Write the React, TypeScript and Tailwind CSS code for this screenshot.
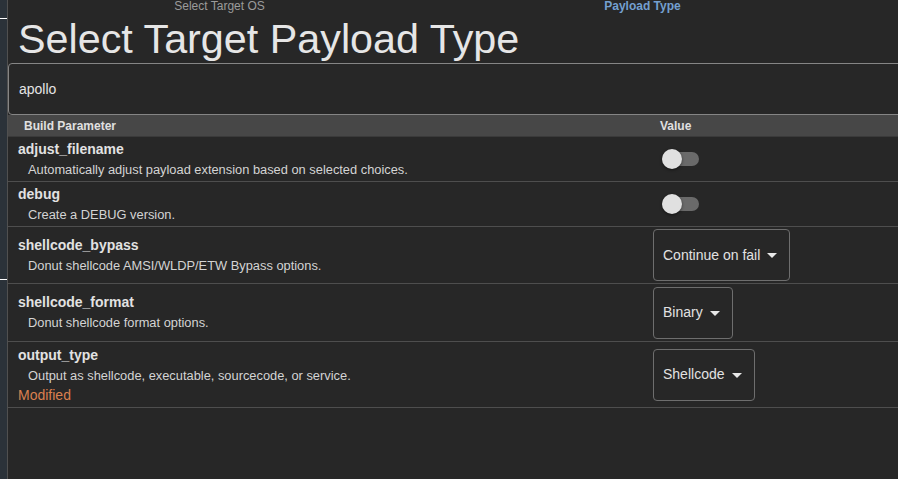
import React from "react";

type Param = {
  name: string;
  description: string;
  kind: "switch" | "select";
  value?: string;
  modified?: boolean;
  rowH: string;
};

const params: Param[] = [
  { name: "adjust_filename", description: "Automatically adjust payload extension based on selected choices.", kind: "switch", rowH: "h-[45px]" },
  { name: "debug", description: "Create a DEBUG version.", kind: "switch", rowH: "h-[45px]" },
  { name: "shellcode_bypass", description: "Donut shellcode AMSI/WLDP/ETW Bypass options.", kind: "select", value: "Continue on fail", rowH: "h-[57px]" },
  { name: "shellcode_format", description: "Donut shellcode format options.", kind: "select", value: "Binary", rowH: "h-[58px]" },
  { name: "output_type", description: "Output as shellcode, executable, sourcecode, or service.", kind: "select", value: "Shellcode", modified: true, rowH: "h-[66px]" },
];

function Toggle() {
  return (
    <div className="relative ml-[9px] h-[20px] w-[37px] flex items-center">
      <div className="h-[14px] w-[37px] rounded-full bg-[#6a6a6a]" />
      <div className="absolute left-0 top-0 h-[20px] w-[20px] rounded-full bg-[#e0e0e0] shadow-[0_1px_3px_rgba(0,0,0,0.5)]" />
    </div>
  );
}

function SelectBox({ value }: { value: string }) {
  return (
    <div className="inline-flex h-[52px] items-center rounded-[4px] border border-[#6e6e6e] pl-[9px] pr-[5px] text-[14px] text-[#e2e2e2]">
      <span>{value}</span>
      <svg width="24" height="24" viewBox="0 0 24 24" className="fill-[#e8e8e8]">
        <path d="M7 10l5 5 5-5z" />
      </svg>
    </div>
  );
}

export default function App() {
  return (
    <div className="flex h-[479px] w-[898px] overflow-hidden bg-[#272727] font-['Liberation_Sans',Arial,sans-serif]">
      <div className="w-[8px] shrink-0 border-r border-[#505050] bg-[#2b3239]">
        <div className="h-[19px] border-b border-white" />
        <div className="h-[261px] border-b border-white" />
      </div>
      <div className="flex-1 min-w-0 flex flex-col">
        <div className="flex h-[12px] text-[12px] leading-[12px]">
          <div className="w-[423px] shrink-0 text-center text-[#9b9b9b]">Select Target OS</div>
          <div className="w-[423px] shrink-0 text-center font-bold text-[#74a0d0]">Payload Type</div>
        </div>
        <h1 className="mt-[4px] pl-[10px] text-[41.3px] leading-[47px] text-[#e6e6e6] whitespace-nowrap">
          Select Target Payload Type
        </h1>
        <div className="h-[52px] w-[900px] shrink-0 rounded-[4px] border border-[#858585] flex items-center pl-[10px] text-[14px] text-[#e4e4e4]">
          apollo
        </div>
        <div className="flex h-[22px] shrink-0 items-center border-b border-[#3a3a3a] bg-[#474747] text-[12px] font-bold text-[#e0e0e0]">
          <div className="w-[645px] shrink-0 pl-[16px]">Build Parameter</div>
          <div className="pl-[7px]">Value</div>
        </div>
        {params.map((p) => (
          <div key={p.name} className={`flex ${p.rowH} shrink-0 items-center border-b border-[#4e4e4e]`}>
            <div className="w-[645px] shrink-0 pl-[10px]">
              <div className="text-[14px] font-bold leading-5 text-[#e2e2e2]">{p.name}</div>
              <div className="pl-[10px] pt-[1px] text-[12.85px] leading-5 text-[#d4d4d4]">{p.description}</div>
              {p.modified && <div className="text-[14px] leading-[19px] text-[#d9804f]">Modified</div>}
            </div>
            <div className="flex items-center">
              {p.kind === "switch" ? <Toggle /> : <SelectBox value={p.value || ""} />}
            </div>
          </div>
        ))}
      </div>
    </div>
  );
}
